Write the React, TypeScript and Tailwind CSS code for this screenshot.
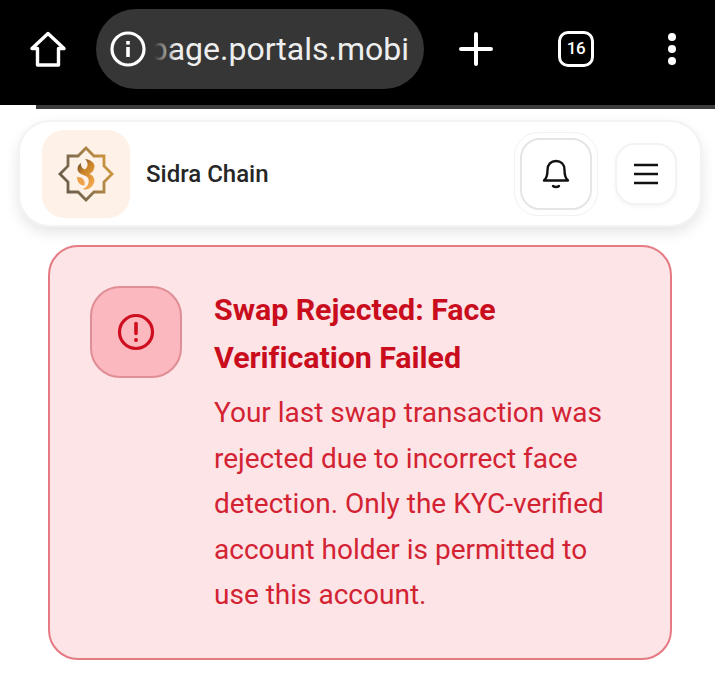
import React from "react";

function Logo() {
  return (
    <svg width="58" height="58" viewBox="0 0 58 58" fill="none">
      <defs>
        <linearGradient id="g" x1="0" y1="1" x2="1" y2="0.6">
          <stop offset="0" stopColor="#5f5246" />
          <stop offset="0.5" stopColor="#85704f" />
          <stop offset="1" stopColor="#c8923f" />
        </linearGradient>
        <linearGradient id="o" x1="0" y1="0" x2="0.6" y2="1">
          <stop offset="0" stopColor="#4f4234" />
          <stop offset="0.45" stopColor="#c98128" />
          <stop offset="1" stopColor="#f0a84a" />
        </linearGradient>
      </defs>
      <path
        d="M29 3 L37 11 H47 V21 L55 29 L47 37 V47 H37 L29 55 L21 47 H11 V37 L3 29 L11 21 V11 H21 Z"
        stroke="url(#g)"
        strokeWidth="2.8"
        strokeLinejoin="miter"
      />
      <path
        d="M28 14 C36 15 40 20 36 26 C34.5 28 33 28.5 32.5 29 C38 31 40 38 33 43 C31 44.5 28 45 26 44 C31 42 33 37 31 33 C29 30 25 30 22.5 28 C19 25 20.5 20 24 18 C23.5 21 25 23.5 28 24.5 C31 22 32 18 28 14 Z"
        fill="url(#o)"
      />
      <path d="M20 32 C25 31.5 28.5 35 27.5 40.5 C23 40.5 20 37 20 32 Z" fill="#eda24a" />
    </svg>
  );
}

export default function App() {
  return (
    <div
      className="w-[715px] h-[697px] bg-white overflow-hidden"
      style={{ fontFamily: "Roboto, 'Liberation Sans', sans-serif" }}
    >
      <header className="h-[105px] bg-black flex items-start">
        <div className="w-[96px] h-[98px] flex items-center justify-center">
          <svg width="38" height="38" viewBox="0 0 38 38" fill="none" stroke="white" strokeWidth="3.4" strokeLinejoin="round" strokeLinecap="round">
            <path d="M3 18.5 L19 3.5 L35 18.5 H29.5 V35 H8.5 V18.5 Z" />
          </svg>
        </div>
        <div className="mt-[9px] w-[328px] h-[80px] rounded-[40px] bg-[#363636] flex items-center pl-[14px] relative overflow-hidden">
          <svg width="36" height="36" viewBox="0 0 36 36" fill="none" className="shrink-0">
            <circle cx="18" cy="18" r="16" stroke="white" strokeWidth="3.2" />
            <rect x="16.2" y="16" width="3.6" height="10" fill="white" />
            <rect x="16.2" y="10" width="3.6" height="3.6" fill="white" />
          </svg>
          <div className="w-[254px] ml-[9px] overflow-hidden flex justify-end">
            <span className="text-[32px] leading-[40px] text-[#eeeeee] whitespace-nowrap">homepage.portals.mobi</span>
          </div>
          <div className="absolute left-[58px] top-0 h-full w-[22px] bg-gradient-to-r from-[#363636] to-transparent" />
        </div>
        <div className="flex-1 flex items-center h-[98px]">
          <svg width="34" height="34" viewBox="0 0 34 34" className="ml-[35px]" stroke="white" strokeWidth="4" strokeLinecap="round">
            <path d="M2 17 H32 M17 2 V32" />
          </svg>
          <div className="ml-[65px] w-[36px] h-[36px] rounded-[10px] border-[3.5px] border-white flex items-center justify-center text-white text-[17px] font-medium tracking-[-0.5px]">
            16
          </div>
          <div className="ml-[74px] flex flex-col gap-[4px]">
            <span className="w-[8px] h-[8px] rounded-full bg-white" />
            <span className="w-[8px] h-[8px] rounded-full bg-white" />
            <span className="w-[8px] h-[8px] rounded-full bg-white" />
          </div>
        </div>
      </header>
      <div className="h-[4px] flex">
        <div className="w-[36px] bg-white" />
        <div className="flex-1 bg-[#3c3c3c]" />
      </div>

      <nav className="mt-[11px] ml-[18px] mr-[13px] h-[107px] rounded-[32px] bg-white border-2 border-[#f3f3f3] shadow-[0_6px_14px_rgba(0,0,0,0.1)] flex items-center pl-[22px]">
        <div className="w-[88px] h-[88px] rounded-[22px] bg-[#fef1e7] flex items-center justify-center">
          <Logo />
        </div>
        <span className="ml-[16px] text-[24px] font-medium text-[#262626]">Sidra Chain</span>
        <div className="ml-auto w-[84px] h-[84px] rounded-[24px] border border-[#f2f2f2] flex items-center justify-center">
          <div className="w-[72px] h-[72px] rounded-[20px] bg-white border-2 border-[#e5e5e5] flex items-center justify-center">
            <svg width="28" height="30" viewBox="0 0 28 30" fill="none" stroke="#111" strokeWidth="2.4" strokeLinecap="round" strokeLinejoin="round">
              <path d="M2 21.5 C5 19 5.5 16 5.5 11 C5.5 5.5 9 2 14 2 C19 2 22.5 5.5 22.5 11 C22.5 16 23 19 26 21.5 Z" />
              <path d="M11 27 C12.5 28.4 15.5 28.4 17 27" />
            </svg>
          </div>
        </div>
        <div className="ml-[17px] mr-[23px] w-[62px] h-[62px] rounded-[20px] bg-white border-2 border-[#f3f3f3] shadow-[0_2px_4px_rgba(0,0,0,0.04)] flex items-center justify-center">
          <svg width="26" height="22" viewBox="0 0 26 22" stroke="#111" strokeWidth="2.6">
            <path d="M1 2 H25 M1 11 H25 M1 20 H25" />
          </svg>
        </div>
      </nav>

      <section className="mt-[18px] ml-[48px] mr-[43px] h-[415px] rounded-[30px] bg-[#fce4e7] border-2 border-[#e57a82] flex pl-[40px] pt-[39px]">
        <div className="w-[92px] h-[92px] shrink-0 rounded-[30px] bg-[#fbb8be] border-2 border-[#e08d95] flex items-center justify-center">
          <svg width="38" height="38" viewBox="0 0 38 38" fill="none" stroke="#cf0f1f" strokeWidth="3.2" strokeLinecap="round">
            <circle cx="19" cy="19" r="16.5" />
            <path d="M19 10.5 V20.5" strokeWidth="3.6" />
            <path d="M19 27 V27.1" strokeWidth="4" />
          </svg>
        </div>
        <div className="ml-[32px] w-[410px]">
          <h2 className="text-[30.4px] leading-[48px] font-bold text-[#c90d1d] tracking-[-0.05px]">
            Swap Rejected: Face
            <br />
            Verification Failed
          </h2>
          <p className="mt-[8px] text-[28px] leading-[45.5px] text-[#d32333]">
            Your last swap transaction was
            <br />
            rejected due to incorrect face
            <br />
            detection. Only the KYC-verified
            <br />
            account holder is permitted to
            <br />
            use this account.
          </p>
        </div>
      </section>
    </div>
  );
}
